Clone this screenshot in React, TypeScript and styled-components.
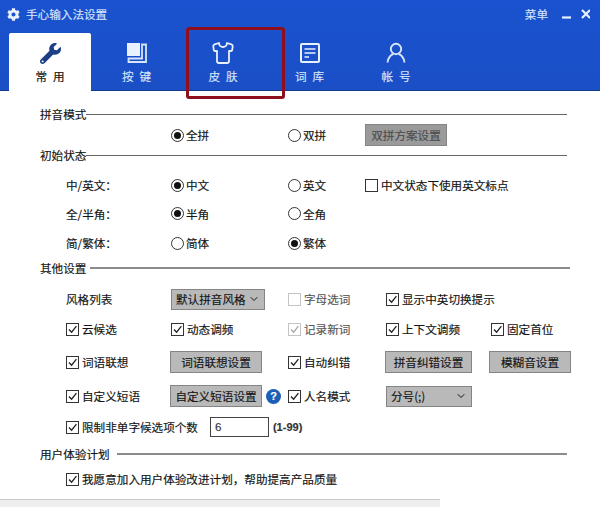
import styled, { createGlobalStyle } from 'styled-components';
import { FaWrench, FaCog } from 'react-icons/fa';
import { Shirt, ChevronDown } from 'lucide-react';

const GlobalStyle = createGlobalStyle`
  html, body {
    margin: 0;
    padding: 0;
    background: #ffffff;
  }
  body {
    font-family: "Noto Sans CJK SC", "Liberation Sans", sans-serif;
    font-size: 11.6px;
    color: #141414;
    -webkit-text-stroke: 0.15px currentColor;
  }
`;

const Window = styled.div`
  position: relative;
  width: 600px;
  height: 507px;
  overflow: hidden;
  display: flex;
  flex-direction: column;
`;

const Header = styled.header`
  height: 91px;
  flex: none;
  background: linear-gradient(#1a52cf, #1a4fc6);
  border-bottom: 1px solid #123a8c;
  box-sizing: border-box;
  color: #d8e6fb;
`;

const TitleBar = styled.div`
  height: 33px;
  display: flex;
  align-items: center;
  padding: 0 10px 5px 7px;
  box-sizing: border-box;
`;

const Title = styled.span`
  margin-left: 6px;
  flex: 1;
`;

const MenuLabel = styled.span`
  margin-right: 14px;
`;

const TabRow = styled.nav`
  display: flex;
  gap: 4.5px;
  padding-left: 9px;
`;

const Tab = styled.div<{ $active?: boolean }>`
  width: 82px;
  height: ${(p) => (p.$active ? 59 : 57)}px;
  display: flex;
  flex-direction: column;
  align-items: center;
  box-sizing: border-box;
  padding-top: 8px;
  border-radius: 2px 2px 0 0;
  background: ${(p) => (p.$active ? '#ffffff' : 'transparent')};
  color: ${(p) => (p.$active ? '#141414' : '#d8e6fb')};
`;

const TabIcon = styled.div`
  height: 24px;
  display: flex;
  align-items: center;
  justify-content: center;
`;

const TabLabel = styled.span`
  margin-top: 2px;
  line-height: 18px;
  letter-spacing: 6px;
  margin-right: -6px;
`;

const Highlight = styled.div`
  position: absolute;
  left: 186px;
  top: 27px;
  width: 99px;
  height: 72px;
  box-sizing: border-box;
  border: 3px solid #8f0f1f;
  border-radius: 3px;
`;

const Body = styled.main`
  flex: 1;
  padding-top: 13px;
`;

const SectionHead = styled.div<{ $end: number; $thick?: boolean; $gap?: number; $mt?: number }>`
  display: flex;
  align-items: center;
  height: 20px;
  margin-top: ${(p) => p.$mt ?? 0}px;
  margin-left: 40px;
  width: ${(p) => p.$end - 40}px;
  &::after {
    content: '';
    flex: 1;
    margin-left: ${(p) => p.$gap ?? 0}px;
    height: ${(p) => (p.$thick ? 2 : 1)}px;
    background: ${(p) => (p.$thick ? '#8c8c8c' : '#666666')};
  }
`;

const Row = styled.div<{ $h: number; $mt?: number }>`
  display: grid;
  grid-template-columns: 105px 117px 98px 105px 1fr;
  align-items: center;
  height: ${(p) => p.$h}px;
  margin-top: ${(p) => p.$mt ?? 0}px;
  padding-left: 66px;
  white-space: nowrap;
`;

const Cell = styled.div<{ $col?: number; $span?: number; $ml?: number }>`
  grid-column: ${(p) => p.$col ?? 'auto'} / span ${(p) => p.$span ?? 1};
  display: flex;
  align-items: center;
  gap: 3px;
  min-width: 0;
  margin-left: ${(p) => p.$ml ?? 0}px;
`;

const RadioMark = styled.span<{ $on?: boolean }>`
  width: 13px;
  height: 13px;
  flex: none;
  box-sizing: border-box;
  border: 1px solid #333333;
  border-radius: 50%;
  margin-right: -1px;
  display: flex;
  align-items: center;
  justify-content: center;
  &::after {
    content: '';
    width: 7px;
    height: 7px;
    border-radius: 50%;
    background: ${(p) => (p.$on ? '#111111' : 'transparent')};
  }
`;

const CheckBox = styled.span<{ $faded?: boolean }>`
  width: 13px;
  height: 13px;
  flex: none;
  box-sizing: border-box;
  border: 1px solid ${(p) => (p.$faded ? '#c4c4c4' : '#333333')};
  background: #ffffff;
  display: flex;
  align-items: center;
  justify-content: center;
`;

const Label = styled.span<{ $faded?: boolean }>`
  color: ${(p) => (p.$faded ? '#555555' : '#141414')};
`;

const Button = styled.button<{ $w: number; $disabled?: boolean; $ml?: number }>`
  width: ${(p) => p.$w}px;
  height: 22px;
  padding: 0;
  margin-left: ${(p) => p.$ml ?? 0}px;
  box-sizing: border-box;
  font: inherit;
  border: 1px solid #858585;
  background: ${(p) => (p.$disabled ? '#9a9a9a' : '#b9b9b9')};
  color: ${(p) => (p.$disabled ? '#4c4c4c' : '#141414')};
`;

const Select = styled.div<{ $w: number }>`
  width: ${(p) => p.$w}px;
  height: 21px;
  box-sizing: border-box;
  padding: 0 4px 0 4px;
  border: 1px solid #858585;
  background: #b9b9b9;
  display: flex;
  align-items: center;
  justify-content: space-between;
`;

const Help = styled.span`
  width: 15px;
  height: 15px;
  flex: none;
  margin-left: 1px;
  border-radius: 50%;
  background: #1c5fb4;
  color: #ffffff;
  font-family: "Liberation Sans", sans-serif;
  font-size: 11px;
  font-weight: bold;
  line-height: 15px;
  text-align: center;
`;

const CountInput = styled.div`
  width: 59px;
  height: 20px;
  margin-left: 9px;
  padding-left: 4px;
  box-sizing: border-box;
  border: 1px solid #444444;
  line-height: 18px;
  font-family: "Liberation Sans", sans-serif;
  color: #333333;
`;

const Range = styled.span`
  margin-left: 1px;
  font-family: "Liberation Sans", sans-serif;
  font-size: 11px;
  font-weight: bold;
  color: #333333;
`;

const Footer = styled.footer`
  position: absolute;
  left: 0;
  bottom: 0;
  width: 440px;
  height: 8px;
  background: #eeeeee;
  border-top: 1px solid #c8c8c8;
  box-sizing: border-box;
`;

function Radio({ on, children }: { on?: boolean; children: string }) {
  return (
    <Cell>
      <RadioMark $on={on} />
      <Label>{children}</Label>
    </Cell>
  );
}

function Check({ on = true, faded, children }: { on?: boolean; faded?: boolean; children: string }) {
  return (
    <>
      <CheckBox $faded={faded}>
        {on && (
          <svg width="11" height="11" viewBox="0 0 11 11" fill="none">
            <path d="M2 5.5 L4.6 8.2 L9.4 2.2" stroke={faded ? '#a8a8a8' : '#222222'} strokeWidth="1.3" />
          </svg>
        )}
      </CheckBox>
      <Label $faded={faded}>{children}</Label>
    </>
  );
}

function KeysIcon() {
  return (
    <svg width="22" height="22" viewBox="0 0 22 22" fill="none">
      <rect x="1" y="1" width="13" height="13" fill="#e8f1fd" />
      <path d="M16 2.5 H20 V20 H2.5 V16.5 H16 Z" stroke="#d8e6fb" strokeWidth="1.8" />
    </svg>
  );
}

function DictIcon() {
  return (
    <svg width="20" height="20" viewBox="0 0 20 20" fill="none" stroke="#e8f1fd">
      <rect x="1" y="1" width="18" height="18" rx="1" strokeWidth="2" />
      <path d="M4.5 6 H15.5 M4.5 10 H15.5 M4.5 14 H9" strokeWidth="1.6" />
    </svg>
  );
}

function UserIcon() {
  return (
    <svg width="20" height="22" viewBox="0 0 20 22" fill="none" stroke="#d8e6fb" strokeWidth="1.9">
      <circle cx="10" cy="7" r="5.2" />
      <path d="M1.5 20.5 C2 15.5 5 12.5 7.5 12 M18.5 20.5 C18 15.5 15 12.5 12.5 12" />
    </svg>
  );
}

export default function App() {
  return (
    <>
      <GlobalStyle />
      <Window>
        <Header>
          <TitleBar>
            <FaCog size={13} color="#e8f1fd" />
            <Title>手心输入法设置</Title>
            <MenuLabel>菜单</MenuLabel>
            <svg width="28" height="12" viewBox="0 0 28 12" fill="none" stroke="#e8f1fd" strokeWidth="2.2">
              <path d="M0 9.5 H9" />
              <path d="M20 2 L28 10 M28 2 L20 10" />
            </svg>
          </TitleBar>
          <TabRow>
            <Tab $active>
              <TabIcon>
                <FaWrench size={21} color="#1c3f86" />
              </TabIcon>
              <TabLabel>常用</TabLabel>
            </Tab>
            <Tab>
              <TabIcon>
                <KeysIcon />
              </TabIcon>
              <TabLabel>按键</TabLabel>
            </Tab>
            <Tab>
              <TabIcon>
                <Shirt size={24} color="#e8f1fd" strokeWidth={1.8} />
              </TabIcon>
              <TabLabel>皮肤</TabLabel>
            </Tab>
            <Tab>
              <TabIcon>
                <DictIcon />
              </TabIcon>
              <TabLabel>词库</TabLabel>
            </Tab>
            <Tab>
              <TabIcon>
                <UserIcon />
              </TabIcon>
              <TabLabel>帐号</TabLabel>
            </Tab>
          </TabRow>
        </Header>
        <Highlight />
        <Body>
          <SectionHead $end={567}>拼音模式</SectionHead>
          <Row $h={21}>
            <Cell $col={2}>
              <RadioMark $on />
              <Label>全拼</Label>
            </Cell>
            <Radio>双拼</Radio>
            <Cell $ml={-21}>
              <Button $w={82} $disabled>双拼方案设置</Button>
            </Cell>
          </Row>
          <SectionHead $end={567}>初始状态</SectionHead>
          <Row $h={28} $mt={6}>
            <Cell>中/英文：</Cell>
            <Radio on>中文</Radio>
            <Radio>英文</Radio>
            <Cell $span={2} $ml={-21}>
              <Check on={false}>中文状态下使用英文标点</Check>
            </Cell>
          </Row>
          <Row $h={29}>
            <Cell>全/半角：</Cell>
            <Radio on>半角</Radio>
            <Radio>全角</Radio>
          </Row>
          <Row $h={30}>
            <Cell>简/繁体：</Cell>
            <Radio>简体</Radio>
            <Radio on>繁体</Radio>
          </Row>
          <SectionHead $end={570} $thick $gap={4}>其他设置</SectionHead>
          <Row $h={30} $mt={6}>
            <Cell>风格列表</Cell>
            <Cell>
              <Select $w={94}>
                默认拼音风格
                <ChevronDown size={12} />
              </Select>
            </Cell>
            <Cell>
              <Check on={false} faded>字母选词</Check>
            </Cell>
            <Cell $span={2}>
              <Check>显示中英切换提示</Check>
            </Cell>
          </Row>
          <Row $h={30}>
            <Cell>
              <Check>云候选</Check>
            </Cell>
            <Cell>
              <Check>动态调频</Check>
            </Cell>
            <Cell>
              <Check faded>记录新词</Check>
            </Cell>
            <Cell>
              <Check>上下文调频</Check>
            </Cell>
            <Cell>
              <Check>固定首位</Check>
            </Cell>
          </Row>
          <Row $h={32} $mt={2}>
            <Cell>
              <Check>词语联想</Check>
            </Cell>
            <Cell>
              <Button $w={92} $ml={-1}>词语联想设置</Button>
            </Cell>
            <Cell>
              <Check>自动纠错</Check>
            </Cell>
            <Cell>
              <Button $w={87} $ml={-1}>拼音纠错设置</Button>
            </Cell>
            <Cell>
              <Button $w={82} $ml={-2}>模糊音设置</Button>
            </Cell>
          </Row>
          <Row $h={32} $mt={2}>
            <Cell>
              <Check>自定义短语</Check>
            </Cell>
            <Cell>
              <Button $w={92} $ml={-1}>自定义短语设置</Button>
              <Help>?</Help>
            </Cell>
            <Cell>
              <Check>人名模式</Check>
            </Cell>
            <Cell>
              <Select $w={86}>
                分号(;)
                <ChevronDown size={12} />
              </Select>
            </Cell>
          </Row>
          <Row $h={30}>
            <Cell $span={3}>
              <Check>限制非单字候选项个数</Check>
              <CountInput>6</CountInput>
              <Range>(1-99)</Range>
            </Cell>
          </Row>
          <SectionHead $end={567} $thick $gap={7} $mt={2}>用户体验计划</SectionHead>
          <Row $h={30}>
            <Cell $span={5}>
              <Check>我愿意加入用户体验改进计划，帮助提高产品质量</Check>
            </Cell>
          </Row>
        </Body>
        <Footer />
      </Window>
    </>
  );
}
